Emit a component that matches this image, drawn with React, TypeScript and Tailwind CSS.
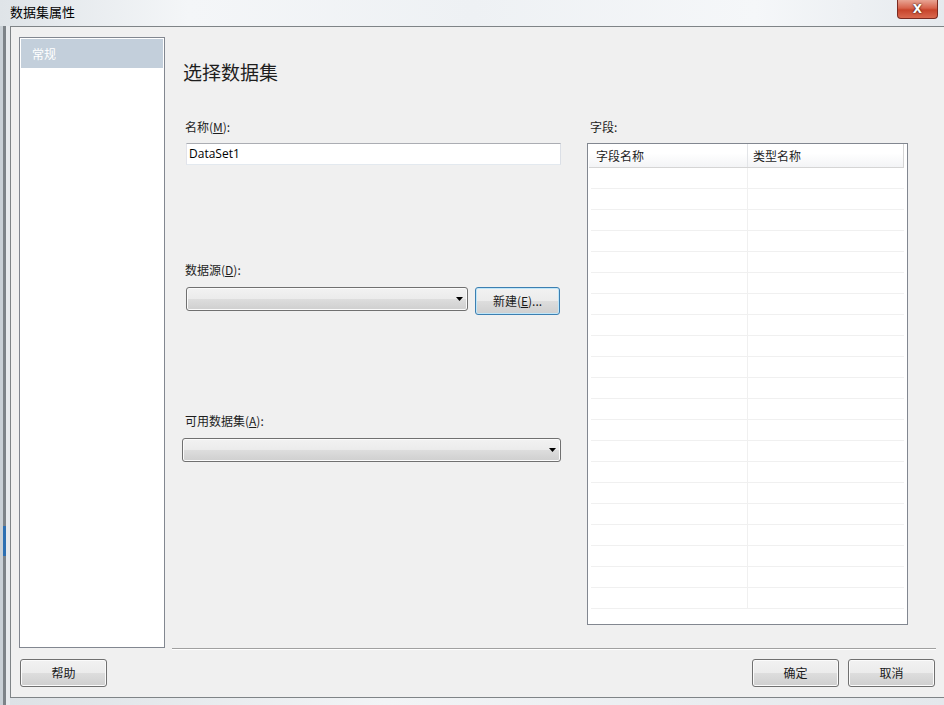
import React from "react";

const cjk = { fontFamily: '"Noto Sans CJK SC", "Noto Sans", sans-serif' };

function Btn({ children, className = "", focus = false }: { children: React.ReactNode; className?: string; focus?: boolean }) {
  return (
    <div
      className={`flex h-[28px] items-center justify-center rounded-[3px] border text-[12px] text-[#1a1a1a] ${
        focus ? "border-[#3c7fb1] shadow-[inset_0_0_0_1px_#bfe6f9]" : "border-[#707070] shadow-[inset_0_0_0_1px_#fbfbfb]"
      } bg-[linear-gradient(#f2f2f2_0%,#ebebeb_50%,#dddddd_51%,#cfcfcf_100%)] ${className}`}
    >
      {children}
    </div>
  );
}

function Combo({ className = "" }: { className?: string }) {
  return (
    <div
      className={`flex h-[24px] items-center justify-end rounded-[3px] border border-[#707070] bg-[linear-gradient(#f2f2f2_0%,#ebebeb_50%,#dddddd_51%,#cfcfcf_100%)] pr-[4px] shadow-[inset_0_0_0_1px_#fbfbfb] ${className}`}
    >
      <svg width="7" height="4" viewBox="0 0 7 4">
        <path d="M0 0 H7 L3.5 4 Z" fill="#000" />
      </svg>
    </div>
  );
}

export default function App() {
  const rows = Array.from({ length: 21 });
  return (
    <div className="flex h-[705px] w-[944px] flex-col overflow-hidden bg-[#e9edf1] text-[12px] text-black" style={cjk}>
      {/* title bar */}
      <div className="flex h-[26px] shrink-0 items-start justify-between bg-[linear-gradient(90deg,#dfe4e8_0%,#f4f6f8_20%,#eef1f4_50%,#f5f7f9_80%,#e6eaee_100%)]">
        <div className="pl-[10px] pt-[4px] text-[13px] leading-[16px] text-black">数据集属性</div>
        <div className="mr-[6px] flex h-[19px] w-[41px] items-center justify-center rounded-b-[4px] border border-t-0 border-[#7a2a20] bg-[linear-gradient(#e8a493_0%,#d7634c_45%,#c7442b_55%,#d9694f_100%)] text-[12px] font-bold leading-none text-white" style={{ fontFamily: '"DejaVu Sans", sans-serif', textShadow: "0 0 2px #000" }}>
          X
        </div>
      </div>
      {/* body with frame */}
      <div className="flex min-h-0 flex-1">
        <div className="flex w-[10px] shrink-0">
          <div className="w-[3px] bg-[#c9d0d6]" />
          <div className="flex w-[3px] flex-col bg-[#7d8388]">
            <div className="h-[500px]" />
            <div className="h-[30px] bg-[#2d6fb1]" />
          </div>
          <div className="w-[4px] bg-[#e7eaed]" />
        </div>
        <div className="flex min-w-0 flex-1 flex-col">
          <div className="flex h-[672px] flex-col border-l border-t border-b border-[#7f8487] bg-[#f0f0f0]">
            <div className="flex h-[621px] pt-[10px]">
              {/* left list */}
              <div className="ml-[8px] h-[611px] w-[146px] shrink-0 border border-[#828790] bg-white p-[1px]">
                <div className="flex h-[29px] items-center bg-[#c3cfdb] pl-[11px] text-[12px] text-white">常规</div>
              </div>
              {/* right */}
              <div className="ml-[7px] flex w-[762px] flex-col">
                <div className="flex flex-1">
                  {/* form column */}
                  <div className="ml-[10px] flex w-[379px] flex-col">
                    <div className="mt-[21px] h-[28px] pl-[1px] text-[19px] leading-[28px] text-[#1e1e1e]">选择数据集</div>
                    <div className="mt-[33px] h-[16px] pl-[3px] leading-[16px] text-[#1e1e1e]">
                      名称(<span className="underline">M</span>):
                    </div>
                    <div className="ml-[4px] mt-[8px] flex h-[22px] items-center border border-[#abadb3] border-b-[#e3e9ef] border-l-[#e2e3ea] border-r-[#dbdfe6] bg-white pl-[2px] text-[12px]" style={{ fontFamily: '"Open Sans", "Noto Sans", sans-serif' }}>
                      DataSet1
                    </div>
                    <div className="mt-[97px] h-[16px] pl-[3px] leading-[16px] text-[#1e1e1e]">
                      数据源(<span className="underline">D</span>):
                    </div>
                    <div className="ml-[4px] mt-[9px] flex h-[28px] items-start gap-[7px]">
                      <Combo className="w-[282px]" />
                      <Btn focus className="w-[85px]">
                        新建(<span className="underline">E</span>)...
                      </Btn>
                    </div>
                    <div className="mt-[98px] h-[16px] pl-[3px] leading-[16px] text-[#1e1e1e]">
                      可用数据集(<span className="underline">A</span>):
                    </div>
                    <Combo className="mt-[9px] w-[379px]" />
                  </div>
                  {/* table column */}
                  <div className="ml-[26px] flex w-[321px] flex-col">
                    <div className="mt-[82px] h-[16px] pl-[3px] leading-[16px] text-[#1e1e1e]">字段:</div>
                    <div className="mt-[8px] flex h-[482px] flex-col border border-[#828790] bg-white pl-[1px] pr-[3px]">
                      <div className="flex h-[24px] shrink-0 border-b border-[#d5d5d5] bg-[linear-gradient(#ffffff_0%,#ffffff_40%,#f3f4f6_100%)]">
                        <div className="flex w-[159px] items-center border-r border-[#e3e5e8] pl-[7px] text-[#1e1e1e]">字段名称</div>
                        <div className="flex flex-1 items-center border-r border-[#d5d5d5] pl-[5px] text-[#1e1e1e]">类型名称</div>
                      </div>
                      {rows.map((_, i) => (
                        <div key={i} className="ml-[2px] flex h-[21px] shrink-0 border-b border-[#f0f0f0]">
                          <div className="w-[157px] border-r border-[#f0f0f0]" />
                          <div className="flex-1" />
                        </div>
                      ))}
                    </div>
                  </div>
                </div>
              </div>
            </div>
            {/* separator */}
            <div className="ml-[161px] mr-[8px] h-[2px] border-t border-b border-t-[#a0a0a0] border-b-white" />
            {/* footer */}
            <div className="flex items-start justify-between pl-[9px] pr-[9px] pt-[9px]">
              <Btn className="w-[87px]">帮助</Btn>
              <div className="flex gap-[9px]">
                <Btn className="w-[87px]">确定</Btn>
                <Btn className="w-[87px]">取消</Btn>
              </div>
            </div>
          </div>
          <div className="flex-1 bg-[linear-gradient(90deg,#dde2e6,#f2f4f6_40%,#e4e8ec)]" />
        </div>
      </div>
    </div>
  );
}
